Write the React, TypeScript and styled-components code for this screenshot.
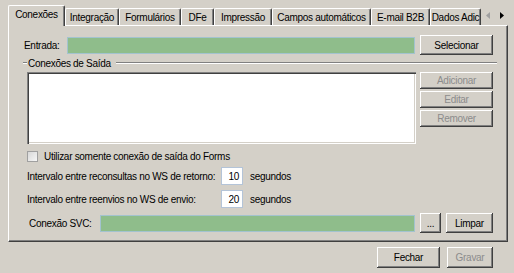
import React from "react";
import styled, { createGlobalStyle } from "styled-components";

const GlobalStyle = createGlobalStyle`
  html, body {
    margin: 0;
    padding: 0;
    background: #d4d0c8;
  }
  body {
    font-family: "Liberation Sans", Arial, sans-serif;
    font-size: 10px;
    letter-spacing: -0.3px;
    color: #000;
  }
  * {
    box-sizing: border-box;
  }
`;

const Window = styled.div`
  width: 514px;
  height: 273px;
  padding: 5px 0 0 8px;
  display: flex;
  flex-direction: column;
  overflow: hidden;
`;

const TabStrip = styled.div`
  display: flex;
  align-items: flex-end;
  height: 21px;
  position: relative;
  z-index: 1;
`;

const TabList = styled.div`
  display: flex;
  align-items: flex-end;
  width: 473px;
  height: 21px;
  overflow: hidden;
`;

const Tab = styled.div<{ $w: number; $active?: boolean }>`
  flex: none;
  width: ${(p) => p.$w}px;
  height: ${(p) => (p.$active ? 21 : 17)}px;
  margin-bottom: ${(p) => (p.$active ? 0 : 1)}px;
  padding-bottom: ${(p) => (p.$active ? 3 : 0)}px;
  display: flex;
  align-items: center;
  justify-content: center;
  white-space: nowrap;
  background: #d4d0c8;
  border-top: 1px solid #fff;
  border-left: 1px solid #fff;
  border-right: 1px solid #404040;
  box-shadow: inset -1px 0 0 #808080;
  border-radius: 2px 2px 0 0;
`;

const Arrows = styled.div`
  display: flex;
  height: 21px;
  align-items: center;
`;

const ArrowBox = styled.div`
  width: 14px;
  height: 21px;
  display: flex;
  align-items: center;
  justify-content: center;
`;

const Panel = styled.div`
  width: 500px;
  height: 217px;
  margin-top: -1px;
  padding: 9px 10px 0 14px;
  border-top: 1px solid #fff;
  border-left: 1px solid #fff;
  border-right: 1px solid #404040;
  border-bottom: 1px solid #404040;
  box-shadow: inset -1px -1px 0 #808080;
  display: flex;
  flex-direction: column;
`;

const Row = styled.div<{ $h: number; $mt?: number; $pl?: number; $pr?: number }>`
  display: flex;
  align-items: center;
  height: ${(p) => p.$h}px;
  margin-top: ${(p) => p.$mt ?? 0}px;
  padding-left: ${(p) => p.$pl ?? 0}px;
  padding-right: ${(p) => p.$pr ?? 0}px;
`;

const Label = styled.span<{ $w?: number; $pl?: number }>`
  flex: none;
  width: ${(p) => (p.$w ? `${p.$w}px` : "auto")};
  padding-left: ${(p) => p.$pl ?? 0}px;
  white-space: nowrap;
`;

const GreenField = styled.div`
  flex: 1;
  height: 17px;
  background: #8fbd8b;
  border: 1px solid #a3c3cf;
`;

const Button = styled.div<{ $w: number; $h?: number; $ml?: number; $disabled?: boolean }>`
  flex: none;
  width: ${(p) => p.$w}px;
  height: ${(p) => p.$h ?? 20}px;
  margin-left: ${(p) => p.$ml ?? 0}px;
  display: flex;
  align-items: center;
  justify-content: center;
  background: #d4d0c8;
  color: ${(p) => (p.$disabled ? "#8c8c8c" : "#000")};
  box-shadow: inset -1px -1px 0 #404040, inset 1px 1px 0 #fff,
    inset -2px -2px 0 #808080;
  white-space: nowrap;
`;

const Group = styled.div`
  margin-top: 2px;
  display: flex;
  flex-direction: column;
`;

const GroupHeader = styled.div`
  display: flex;
  align-items: center;
  height: 12px;
`;

const Etch = styled.div<{ $w?: number }>`
  flex: ${(p) => (p.$w ? "none" : 1)};
  width: ${(p) => (p.$w ? `${p.$w}px` : "auto")};
  height: 2px;
  margin-top: -1px;
  border-top: 1px solid #808080;
  border-bottom: 1px solid #fff;
`;

const GroupTitle = styled.span`
  padding: 0 5px 0 1px;
  white-space: nowrap;
`;

const GroupBody = styled.div`
  display: flex;
  gap: 4px;
  margin-top: 3px;
  padding: 0 4px;
`;

const ListBox = styled.div`
  flex: 1;
  height: 72px;
  background: #fff;
  box-shadow: inset 1px 1px 0 #808080, inset 2px 2px 0 #404040,
    inset -1px -1px 0 #fff, inset -2px -2px 0 #d4d0c8;
`;

const ButtonColumn = styled.div`
  display: flex;
  flex-direction: column;
  gap: 2px;
`;

const CheckBox = styled.span`
  flex: none;
  width: 11px;
  height: 11px;
  margin-right: 6px;
  border: 1px solid #a0a0a0;
  background: linear-gradient(135deg, #d8d8d8, #f6f6f6);
`;

const NumberInput = styled.div`
  flex: none;
  width: 22px;
  height: 18px;
  margin-right: 7px;
  padding-right: 3px;
  display: flex;
  align-items: center;
  justify-content: flex-end;
  background: #fff;
  border: 1px solid #b4c4d8;
`;

const Footer = styled.div`
  display: flex;
  justify-content: flex-end;
  gap: 7px;
  margin-top: 5px;
  padding-right: 21px;
`;

const tabs = [
  { label: "Conexões", w: 57 },
  { label: "Integração", w: 54 },
  { label: "Formulários", w: 62 },
  { label: "DFe", w: 33 },
  { label: "Impressão", w: 58 },
  { label: "Campos automáticos", w: 99 },
  { label: "E-mail B2B", w: 59 },
  { label: "Dados Adic", w: 51 },
];

const Triangle = ({ dir, color }: { dir: "left" | "right"; color: string }) => (
  <svg width="4" height="7" viewBox="0 0 4 7">
    <path d={dir === "left" ? "M4 0 L0 3.5 L4 7 Z" : "M0 0 L4 3.5 L0 7 Z"} fill={color} />
  </svg>
);

const App = () => {
  return (
    <>
      <GlobalStyle />
      <Window>
        <TabStrip>
          <TabList>
            {tabs.map((t, i) => (
              <Tab key={t.label} $w={t.w} $active={i === 0}>
                {t.label}
              </Tab>
            ))}
          </TabList>
          <Arrows>
            <ArrowBox>
              <Triangle dir="left" color="#a0a0a0" />
            </ArrowBox>
            <ArrowBox>
              <Triangle dir="right" color="#000" />
            </ArrowBox>
          </Arrows>
        </TabStrip>

        <Panel>
          <Row $h={20} $pr={4}>
            <Label $w={44} $pl={1}>Entrada:</Label>
            <GreenField />
            <Button $w={73} $ml={5}>Selecionar</Button>
          </Row>

          <Group>
            <GroupHeader>
              <Etch $w={4} />
              <GroupTitle>Conexões de Saída</GroupTitle>
              <Etch />
            </GroupHeader>
            <GroupBody>
              <ListBox />
              <ButtonColumn>
                <Button $w={73} $h={17} $disabled>Adicionar</Button>
                <Button $w={73} $h={17} $disabled>Editar</Button>
                <Button $w={73} $h={17} $disabled>Remover</Button>
              </ButtonColumn>
            </GroupBody>
          </Group>

          <Row $h={14} $mt={5} $pl={4}>
            <CheckBox />
            <Label>Utilizar somente conexão de saída do Forms</Label>
          </Row>

          <Row $h={18} $mt={4} $pl={4}>
            <Label $w={194}>Intervalo entre reconsultas no WS de retorno:</Label>
            <NumberInput>10</NumberInput>
            <Label>segundos</Label>
          </Row>

          <Row $h={18} $mt={5} $pl={4}>
            <Label $w={194}>Intervalo entre reenvios no WS de envio:</Label>
            <NumberInput>20</NumberInput>
            <Label>segundos</Label>
          </Row>

          <Row $h={20} $mt={5} $pl={4} $pr={4}>
            <Label $w={73} $pl={2}>Conexão SVC:</Label>
            <GreenField />
            <Button $w={21} $ml={5}>...</Button>
            <Button $w={47} $ml={5}>Limpar</Button>
          </Row>
        </Panel>

        <Footer>
          <Button $w={63} $h={21}>Fechar</Button>
          <Button $w={46} $h={21} $disabled>Gravar</Button>
        </Footer>
      </Window>
    </>
  );
};

export default App;
